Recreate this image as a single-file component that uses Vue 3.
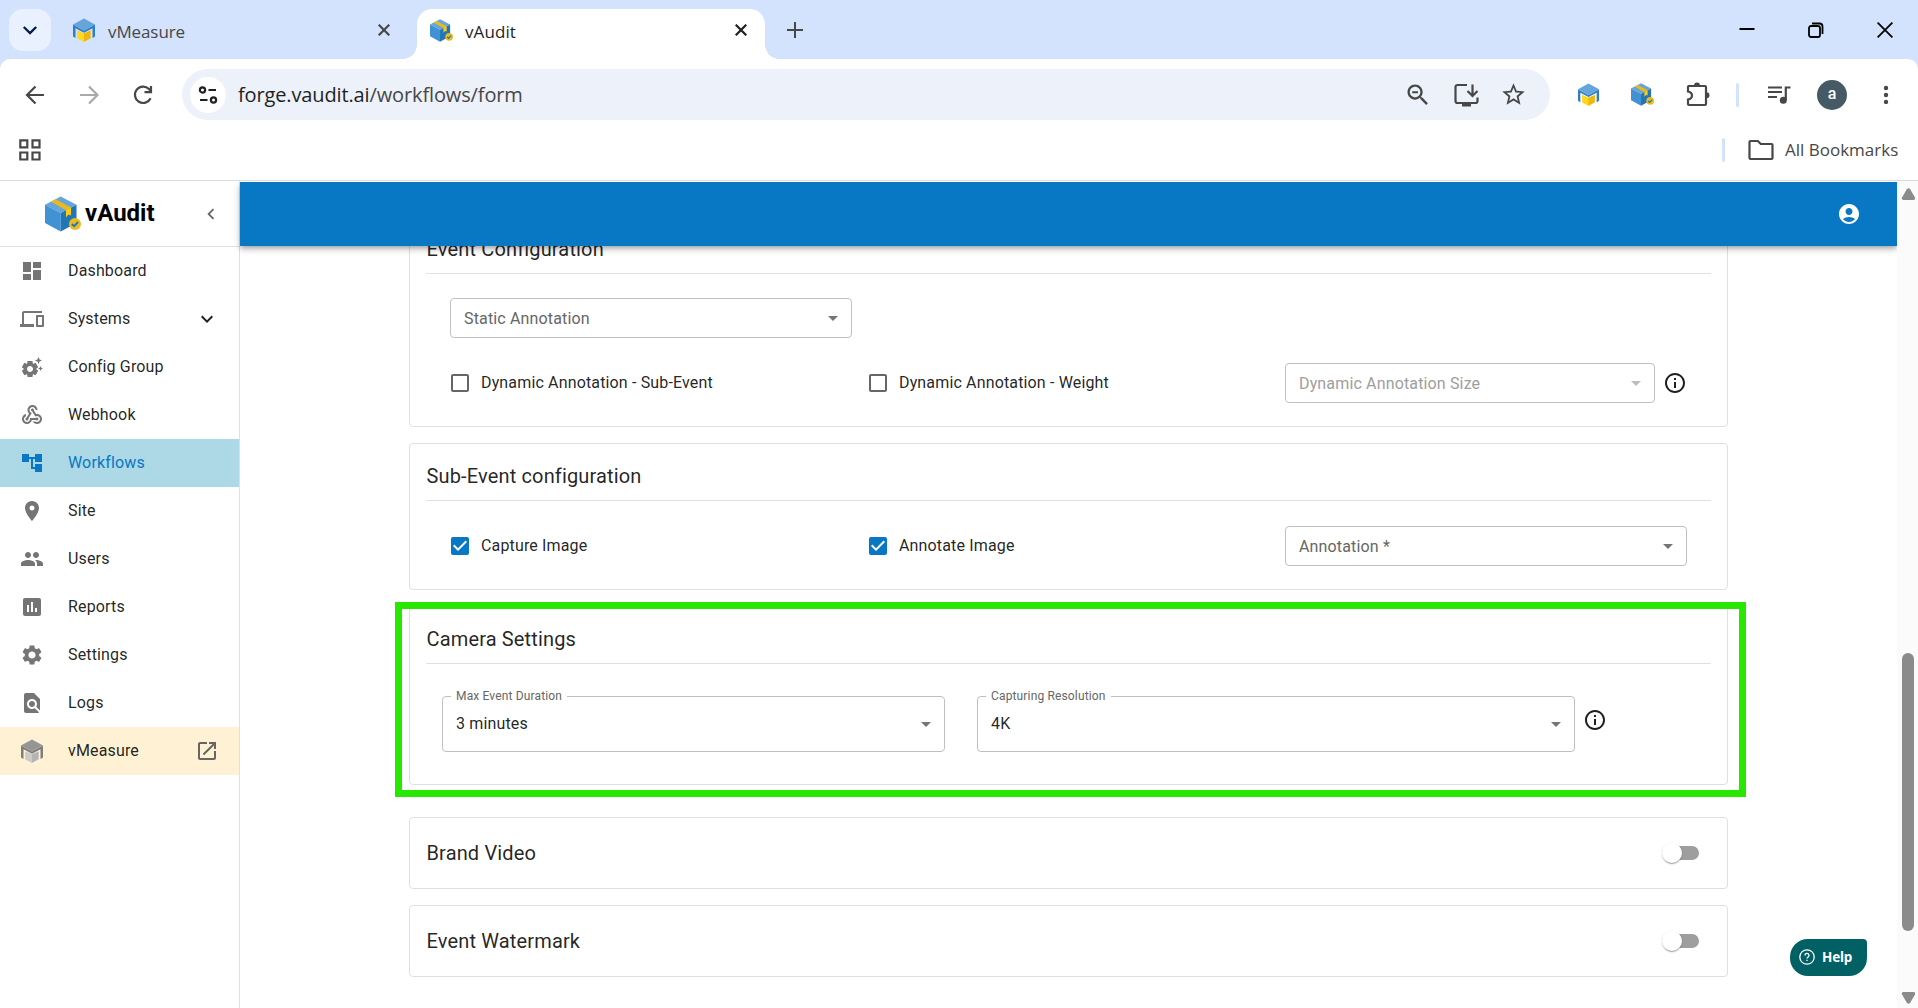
<script setup>
import { ref, h } from 'vue'

const icons = {
  dashboard: 'M3 13h8V3H3v10zm0 8h8v-6H3v6zm10 0h8V11h-8v10zm0-18v6h8V3h-8z',
  devices: 'M4 6h18V4H4c-1.1 0-2 .9-2 2v11H0v3h14v-3H4V6zm19 2h-6c-.55 0-1 .45-1 1v10c0 .55.45 1 1 1h6c.55 0 1-.45 1-1V9c0-.55-.45-1-1-1zm-1 10h-4v-8h4v8z',
  suggest: 'M17.41 6.59L15 5.5l2.41-1.09L18.5 2l1.09 2.41L22 5.5l-2.41 1.09L18.5 9l-1.09-2.41zm3.87 6.13L20.5 11l-.78 1.72-1.72.78 1.72.78.78 1.72.78-1.72L23 13.5l-1.72-.78zm-5.04 1.65l1.94 1.47-2.5 4.33-2.24-.94c-.2.13-.42.26-.64.37l-.3 2.4h-5l-.3-2.41c-.22-.11-.43-.23-.64-.37l-2.24.94-2.5-4.33 1.94-1.47c-.01-.11-.01-.24-.01-.36s0-.25.01-.37l-1.94-1.47 2.5-4.33 2.24.94c.2-.13.42-.26.64-.37L7.5 6h5l.3 2.41c.22.11.43.23.64.37l2.24-.94 2.5 4.33-1.94 1.47c.01.12.01.24.01.37s0 .24-.01.36zM13 14c0-1.66-1.34-3-3-3s-3 1.34-3 3 1.34 3 3 3 3-1.34 3-3z',
  webhook: 'M10 15h5.88c.27-.31.67-.5 1.12-.5.83 0 1.5.67 1.5 1.5s-.67 1.5-1.5 1.5c-.44 0-.84-.19-1.12-.5H11.9c-.46 2.28-2.48 4-4.9 4-2.76 0-5-2.24-5-5 0-2.42 1.72-4.44 4-4.9v2.07C4.84 13.58 4 14.7 4 16c0 1.65 1.35 3 3 3s3-1.35 3-3v-1zm2.5-11c1.65 0 3 1.35 3 3h2c0-2.76-2.24-5-5-5s-5 2.24-5 5c0 1.43.6 2.71 1.55 3.62l-2.35 3.9c-.68.14-1.2.75-1.2 1.48 0 .83.67 1.5 1.5 1.5s1.5-.67 1.5-1.5c0-.16-.02-.31-.07-.45l3.38-5.63C10.49 9.61 9.5 8.42 9.5 7c0-1.65 1.35-3 3-3zm4.5 9c-.64 0-1.23.2-1.72.54l-3.05-5.07C11.53 8.35 11 7.74 11 7c0-.83.67-1.5 1.5-1.5S14 6.17 14 7c0 .15-.02.29-.06.43l2.19 3.65c.28-.05.57-.08.87-.08 2.76 0 5 2.24 5 5s-2.24 5-5 5c-1.85 0-3.47-1.01-4.33-2.5h2.67c.48.32 1.05.5 1.66.5 1.65 0 3-1.35 3-3s-1.35-3-3-3z',
  tree: 'M22 11V3h-7v3H9V3H2v8h7V8h2v10h4v3h7v-8h-7v3h-2V8h2v3h7z',
  place: 'M12 2C8.13 2 5 5.13 5 9c0 5.25 7 13 7 13s7-7.75 7-13c0-3.87-3.13-7-7-7zm0 9.5c-1.38 0-2.5-1.12-2.5-2.5s1.12-2.5 2.5-2.5 2.5 1.12 2.5 2.5-1.12 2.5-2.5 2.5z',
  people: 'M16 11c1.66 0 2.99-1.34 2.99-3S17.66 5 16 5c-1.66 0-3 1.34-3 3s1.34 3 3 3zm-8 0c1.66 0 2.99-1.34 2.99-3S9.66 5 8 5C6.34 5 5 6.34 5 8s1.34 3 3 3zm0 2c-2.33 0-7 1.17-7 3.5V19h14v-2.5c0-2.33-4.67-3.5-7-3.5zm8 0c-.29 0-.62.02-.97.05 1.16.84 1.97 1.97 1.97 3.45V19h6v-2.5c0-2.33-4.67-3.5-7-3.5z',
  reports: 'M19 3H5c-1.1 0-2 .9-2 2v14c0 1.1.9 2 2 2h14c1.1 0 2-.9 2-2V5c0-1.1-.9-2-2-2zM9 17H7v-7h2v7zm4 0h-2V7h2v10zm4 0h-2v-4h2v4z',
  settings: 'M19.14 12.94c.04-.3.06-.61.06-.94 0-.32-.02-.64-.07-.94l2.03-1.58c.18-.14.23-.41.12-.61l-1.92-3.32c-.12-.22-.37-.29-.59-.22l-2.39.96c-.5-.38-1.03-.7-1.62-.94l-.36-2.54c-.04-.24-.24-.41-.48-.41h-3.84c-.24 0-.43.17-.47.41l-.36 2.54c-.59.24-1.13.57-1.62.94l-2.39-.96c-.22-.08-.47 0-.59.22L2.74 8.87c-.12.21-.08.47.12.61l2.03 1.58c-.05.3-.09.63-.09.94s.02.64.07.94l-2.03 1.58c-.18.14-.23.41-.12.61l1.92 3.32c.12.22.37.29.59.22l2.39-.96c.5.38 1.03.7 1.62.94l.36 2.54c.05.24.24.41.48.41h3.84c.24 0 .44-.17.47-.41l.36-2.54c.59-.24 1.13-.56 1.62-.94l2.39.96c.22.08.47 0 .59-.22l1.92-3.32c.12-.22.07-.47-.12-.61l-2.01-1.58zM12 15.6c-1.98 0-3.6-1.62-3.6-3.6s1.62-3.6 3.6-3.6 3.6 1.62 3.6 3.6-1.62 3.6-3.6 3.6z',
  logs: 'M20 19.59V8l-6-6H6c-1.1 0-1.99.9-1.99 2L4 20c0 1.1.89 2 1.99 2H18c.45 0 .85-.15 1.19-.4l-4.43-4.43c-.8.52-1.74.83-2.76.83-2.76 0-5-2.24-5-5s2.24-5 5-5 5 2.24 5 5c0 1.02-.31 1.96-.83 2.75L20 19.59zM9 13c0 1.66 1.34 3 3 3s3-1.34 3-3-1.34-3-3-3-3 1.34-3 3z',
  launch: 'M19 19H5V5h7V3H5c-1.11 0-2 .9-2 2v14c0 1.1.89 2 2 2h14c1.1 0 2-.9 2-2v-7h-2v7zM14 3v2h3.59l-9.83 9.83 1.41 1.41L19 6.41V10h2V3h-7z',
  account: 'M12 2C6.48 2 2 6.48 2 12s4.48 10 10 10 10-4.48 10-10S17.52 2 12 2zm0 4c1.93 0 3.5 1.57 3.5 3.5S13.93 13 12 13s-3.5-1.57-3.5-3.5S10.07 6 12 6zm0 14c-2.03 0-4.43-.82-6.14-2.88C7.55 15.8 9.68 15 12 15s4.45.8 6.14 2.12C16.43 19.18 14.03 20 12 20z',
  info: 'M11 7h2v2h-2zm0 4h2v6h-2zm1-9C6.48 2 2 6.48 2 12s4.48 10 10 10 10-4.48 10-10S17.52 2 12 2zm0 18c-4.41 0-8-3.59-8-8s3.59-8 8-8 8 3.59 8 8-3.59 8-8 8z',
  checked: 'M19 3H5c-1.11 0-2 .9-2 2v14c0 1.1.89 2 2 2h14c1.11 0 2-.9 2-2V5c0-1.1-.89-2-2-2zm-9 14l-5-5 1.41-1.41L10 14.17l7.59-7.59L19 8l-9 9z',
  unchecked: 'M19 5v14H5V5h14m0-2H5c-1.1 0-2 .9-2 2v14c0 1.1.9 2 2 2h14c1.1 0 2-.9 2-2V5c0-1.1-.9-2-2-2z',
  dropdown: 'M7 10l5 5 5-5z',
  expand: 'M16.59 8.59L12 13.17 7.41 8.59 6 10l6 6 6-6z',
  chevron: 'M15.41 7.41L14 6l-6 6 6 6 1.41-1.41L10.83 12z',
  zoomOut: 'M15.5 14h-.79l-.28-.27C15.41 12.59 16 11.11 16 9.5 16 5.91 13.09 3 9.5 3S3 5.91 3 9.5 5.91 16 9.5 16c1.61 0 3.09-.59 4.23-1.57l.27.28v.79l5 4.99L20.49 19l-4.99-5zm-6 0C7.01 14 5 11.99 5 9.5S7.01 5 9.5 5 14 7.01 14 9.5 11.99 14 9.5 14zM7 8.7h5v1.7H7z',
  star: 'M22 9.24l-7.19-.62L12 2 9.19 8.63 2 9.24l5.46 4.73L5.82 21 12 17.27 18.18 21l-1.63-7.03L22 9.24zM12 15.4l-3.76 2.27 1-4.28-3.32-2.88 4.38-.38L12 6.1l1.71 4.04 4.38.38-3.32 2.88 1 4.28L12 15.4z',
}

const Icon = (props) =>
  h('svg', { viewBox: '0 0 24 24', width: props.size || 24, height: props.size || 24, fill: 'currentColor' }, [
    h('path', { d: icons[props.name] }),
  ])
Icon.props = ['name', 'size']

const poly = (fill, points) => h('polygon', { fill, points })

const MeasureLogo = (props) => {
  const c = props.grey
    ? ['#959595', '#7d7d7d', '#bdbdbd', '#cbcbcb', '#b4b4b4']
    : ['#64a5dc', '#2f80c3', '#fdd017', '#ffd91f', '#eeb711']
  return h('svg', { viewBox: '0 0 24 24', width: props.size, height: props.size }, [
    poly(c[1], '1,6.5 12,12.5 23,6.5 23,18.5 20.5,20 20.5,10.2 12,14.7 3.5,10.2 3.5,20 1,18.5'),
    poly(c[0], '12,0.5 23,6.5 12,12.5 1,6.5'),
    poly(c[2], '5.5,12.5 12,15.5 18.5,12.5 18.5,20.2 12,23.8 5.5,20.2'),
    poly(c[3], '5.5,12.5 12,15.5 12,23.8 5.5,20.2'),
    poly(c[4], '18.5,12.5 12,15.5 12,23.8 18.5,20.2'),
  ])
}
MeasureLogo.props = ['size', 'grey']

const AuditLogo = (props) =>
  h('svg', { viewBox: '0 0 36 36', width: props.size, height: props.size }, [
    poly('#64a5dc', '15.7,0.5 31.5,8.7 15.7,17 0,8.7'),
    poly('#4192d3', '0,8.7 15.7,17 15.7,35.5 0,27'),
    poly('#2375b5', '31.5,8.7 15.7,17 15.7,35.5 31.5,27'),
    poly('#e9b91e', '10.8,3.2 26,11.5 21,14.2 6,5.8'),
    poly('#fdcb12', '26,11.5 26,19.6 23.5,18.6 21,21.6 21,14.2'),
    h('circle', { cx: 30, cy: 28, r: 6, fill: '#ebbc20' }),
    h('path', { d: 'M26.8 28l2.3 2.2 4-4.2', fill: 'none', stroke: '#2375b5', 'stroke-width': 1.9 }),
  ])
AuditLogo.props = ['size']

const nav = [
  { label: 'Dashboard', icon: 'dashboard' },
  { label: 'Systems', icon: 'devices', expandable: true },
  { label: 'Config Group', icon: 'suggest' },
  { label: 'Webhook', icon: 'webhook' },
  { label: 'Workflows', icon: 'tree', active: true },
  { label: 'Site', icon: 'place' },
  { label: 'Users', icon: 'people' },
  { label: 'Reports', icon: 'reports' },
  { label: 'Settings', icon: 'settings' },
  { label: 'Logs', icon: 'logs' },
]

const subEvent = ref(false)
const weight = ref(false)
const capture = ref(true)
const annotate = ref(true)
const toggles = ['Brand Video', 'Event Watermark']
</script>

<template>
  <div class="window">
    <div class="tabstrip">
      <button class="tab-search">
        <svg width="16" height="16" viewBox="0 0 16 16" fill="none" stroke="#041e49" stroke-width="2.4"><path d="M1.8 5l6.2 6 6.2-6" /></svg>
      </button>
      <div class="tab">
        <MeasureLogo :size="24" />
        <span class="tab-title">vMeasure</span>
        <svg class="close" width="12" height="12" viewBox="0 0 12 12" stroke="#474747" stroke-width="2.2"><path d="M.7.7l10.6 10.6M11.3.7L.7 11.3" /></svg>
      </div>
      <div class="tab active">
        <AuditLogo :size="23" />
        <span class="tab-title">vAudit</span>
        <svg class="close" width="12" height="12" viewBox="0 0 12 12" stroke="#1f1f1f" stroke-width="2.2"><path d="M.7.7l10.6 10.6M11.3.7L.7 11.3" /></svg>
      </div>
      <svg class="new-tab" width="16" height="16" viewBox="0 0 16 16" stroke="#474747" stroke-width="2"><path d="M8 0v16M0 8h16" /></svg>
      <div class="controls">
        <svg width="16" height="16" viewBox="0 0 16 16" stroke="#000" stroke-width="2"><path d="M.5 7h15" /></svg>
        <svg width="16" height="16" viewBox="0 0 16 16" fill="none" stroke="#000" stroke-width="1.8"><rect x="1" y="4" width="11" height="11" rx="2" /><path d="M4 1.500h7.500a3 3 0 0 1 3 3V12" /></svg>
        <svg width="16" height="16" viewBox="0 0 16 16" stroke="#000" stroke-width="1.8"><path d="M.6.6l14.8 14.8M15.4.6L.6 15.4" /></svg>
      </div>
    </div>

    <div class="chrome">
      <div class="toolbar">
        <svg class="btn" viewBox="0 0 32 32" fill="none" stroke="#474747" stroke-width="2.2"><path d="M25 16H8.500M16.500 7.500L8 16l8.500 8.500" /></svg>
        <svg class="btn" viewBox="0 0 32 32" fill="none" stroke="#a9a9a9" stroke-width="2.2"><path d="M7 16h17M16 7.500l8.500 8.500-8.500 8.500" /></svg>
        <svg class="btn" viewBox="0 0 32 32" fill="none" stroke="#474747" stroke-width="2.2"><path d="M23.600 19.200A8.200 8.200 0 1 1 22 10l2 2.300M24 7v6.200h-6.500" /></svg>
        <div class="omnibox">
          <span class="site-info">
            <svg width="20" height="18" viewBox="0 0 20 18" fill="none" stroke="#202020" stroke-width="2.2"><circle cx="4.500" cy="4" r="2.600" /><path d="M10.500 4H18M2 14h7.500" /><circle cx="15.500" cy="14" r="2.600" /></svg>
          </span>
          <span class="url"><b>forge.vaudit.ai</b>/workflows/form</span>
          <Icon name="zoomOut" :size="28" />
          <svg width="28" height="28" viewBox="0 0 28 28" fill="none" stroke="#474747" stroke-width="2.2"><path d="M15 4H5.500A2 2 0 0 0 3.500 6v14a2 2 0 0 0 2 2h18a2 2 0 0 0 2-2v-3.500M20.500 3.500v11M15.500 10l5 5 5-5" /><path d="M10 24h9" stroke-width="3" /></svg>
          <Icon name="star" :size="27" />
        </div>
        <span class="ext first"><MeasureLogo :size="23" /></span>
        <span class="ext"><AuditLogo :size="23" /></span>
        <svg class="ext puzzle" viewBox="0 0 28 28" fill="none" stroke="#474747" stroke-width="2.2"><path d="M5.500 5h15.500a1 1 0 0 1 1 1v17a1 1 0 0 1-1 1H5a1 1 0 0 1-1-1v-4.500c2.500-.5 4-2 4-4s-1.500-3.500-4-4V6.200A1.200 1.200 0 0 1 5.500 5z" /><path d="M10 4.500a3 3 0 0 1 6 0zM22.500 11.300a3 3 0 0 1 0 6z" fill="#474747" stroke="none" /></svg>
        <i class="divider"></i>
        <svg class="ext plain" viewBox="0 0 28 28" fill="none" stroke="#474747" stroke-width="2.2"><path d="M3 6.500h14M3 11h14M3 16h9M25.500 6.500h-4.700V19" /><circle cx="18.300" cy="19.300" r="3.500" fill="#474747" stroke="none" /></svg>
        <span class="avatar">a</span>
        <svg class="ext dots" viewBox="0 0 28 28" fill="#474747"><circle cx="14" cy="7" r="2.200" /><circle cx="14" cy="14" r="2.200" /><circle cx="14" cy="20.900" r="2.200" /></svg>
      </div>
      <div class="bookmarks">
        <svg width="22" height="22" viewBox="0 0 22 22" fill="none" stroke="#474747" stroke-width="2.2"><path d="M1.300 1.300h7v7h-7zM13.500 1.300h7v7h-7zM1.300 13.500h7v7h-7zM13.500 13.500h7v7h-7z" /></svg>
        <i class="divider"></i>
        <svg class="folder" width="26" height="22" viewBox="0 0 26 22" fill="none" stroke="#474747" stroke-width="2.2"><path d="M2.500 2h7.300l3 3h10.700a1 1 0 0 1 1 1v13a1 1 0 0 1-1 1h-21a1 1 0 0 1-1-1V3a1 1 0 0 1 1-1z" /></svg>
        <span class="all">All Bookmarks</span>
      </div>
    </div>

    <div class="page">
      <aside>
        <div class="brand">
          <AuditLogo :size="36" />
          <strong>vAudit</strong>
          <Icon name="chevron" :size="22" />
        </div>
        <a v-for="item in nav" :key="item.label" :class="['item', { active: item.active }]">
          <Icon :name="item.icon" class="nav-icon" />
          <span>{{ item.label }}</span>
          <Icon v-if="item.expandable" name="expand" class="tail dark" />
        </a>
        <a class="item external">
          <MeasureLogo :size="24" :grey="true" />
          <span>vMeasure</span>
          <Icon name="launch" class="tail" />
        </a>
      </aside>

      <div class="main">
        <header><Icon name="account" /></header>
        <div class="content">
          <section class="card">
            <h2>Event Configuration</h2>
            <div class="body event">
              <div class="select small">Static Annotation<Icon name="dropdown" /></div>
              <div class="row">
                <label class="check" @click="subEvent = !subEvent"><Icon :name="subEvent ? 'checked' : 'unchecked'" :class="{ on: subEvent }" /><span>Dynamic Annotation - Sub-Event</span></label>
                <label class="check" @click="weight = !weight"><Icon :name="weight ? 'checked' : 'unchecked'" :class="{ on: weight }" /><span>Dynamic Annotation - Weight</span></label>
                <div class="select disabled">Dynamic Annotation Size<Icon name="dropdown" /></div>
                <Icon name="info" class="info" />
              </div>
            </div>
          </section>

          <section class="card">
            <h2>Sub-Event configuration</h2>
            <div class="body">
              <div class="row">
                <label class="check" @click="capture = !capture"><Icon :name="capture ? 'checked' : 'unchecked'" :class="{ on: capture }" /><span>Capture Image</span></label>
                <label class="check" @click="annotate = !annotate"><Icon :name="annotate ? 'checked' : 'unchecked'" :class="{ on: annotate }" /><span>Annotate Image</span></label>
                <div class="select small">Annotation *<Icon name="dropdown" /></div>
              </div>
            </div>
          </section>

          <section class="card highlight">
            <h2>Camera Settings</h2>
            <div class="body camera">
              <div class="select tall duration"><small>Max Event Duration</small><span>3 minutes</span><Icon name="dropdown" /></div>
              <div class="select tall resolution"><small>Capturing Resolution</small><span>4K</span><Icon name="dropdown" /></div>
              <Icon name="info" class="info" />
            </div>
          </section>

          <section v-for="title in toggles" :key="title" class="card toggle">
            <h3>{{ title }}</h3>
            <span class="switch"><i></i></span>
          </section>
        </div>
      </div>

      <div class="scrollbar">
        <svg width="15" height="12" viewBox="0 0 15 12" fill="#8b8b8b"><path d="M5.800 1.200Q7.500-.8 9.200 1.200L14 9.500Q14.700 12 12.500 12h-10Q.3 12 1 9.500z" /></svg>
        <i class="thumb"></i>
        <svg width="15" height="12" viewBox="0 0 15 12" fill="#8b8b8b"><path d="M5.800 10.800Q7.500 12.800 9.200 10.800L14 2.500Q14.700 0 12.500 0h-10Q.3 0 1 2.500z" /></svg>
      </div>

      <button class="help">
        <svg width="16" height="16" viewBox="0 0 16 16" fill="none" stroke="#fff" stroke-width="1.3"><circle cx="8" cy="8" r="7.200" /><path d="M6 6.400a2 2 0 1 1 3 1.700c-.7.400-1 .7-1 1.500" /><path d="M8 10.800v1.300" /></svg>
        Help
      </button>
    </div>
  </div>
</template>

<style>
body { margin: 0; overflow: hidden; }
</style>

<style scoped>
* { box-sizing: border-box; }
svg { display: block; flex: none; }
button { border: 0; padding: 0; }
.window { width: 1918px; height: 1008px; display: flex; flex-direction: column; overflow: hidden; background: #d3e2fd; font-family: Roboto, sans-serif; }

.tabstrip { height: 59px; display: flex; align-items: flex-start; padding-left: 9px; font-family: "Open Sans", "Noto Sans", sans-serif; }
.tab-search { width: 42px; height: 42px; margin-top: 9px; border-radius: 14px; background: #eaf1fe; display: flex; align-items: center; justify-content: center; }
.tab { height: 50px; margin-top: 9px; display: flex; align-items: center; width: 344px; padding: 0 8px 8px 0; margin-left: 21px; color: #474747; }
.tab-title { font-size: 17px; letter-spacing: -0.1px; margin: 2px 0 0 12px; }
.close { margin-left: auto; margin-right: 18px; }
.tab.active { position: relative; width: 348px; margin-left: 1px; padding-left: 13px; padding-right: 0; background: #fff; border-radius: 15px 15px 0 0; color: #1f1f1f; }
.tab.active .tab-title { letter-spacing: 0.1px; }
.tab.active::before, .tab.active::after { content: ""; position: absolute; bottom: 0; width: 14px; height: 14px; }
.tab.active::before { left: -14px; background: radial-gradient(circle at 0 0, transparent 13.5px, #fff 14px); }
.tab.active::after { right: -14px; background: radial-gradient(circle at 100% 0, transparent 13.5px, #fff 14px); }
.new-tab { margin: 22px 0 0 22px; }
.controls { margin: 22px 25px 0 auto; display: flex; gap: 53px; }

.chrome { height: 122px; background: #fff; border-radius: 10px 10px 0 0; border-bottom: 1px solid #dcdcdc; font-family: "Open Sans", "Noto Sans", sans-serif; }
.toolbar { display: flex; align-items: center; height: 51px; margin-top: 10px; padding-left: 19px; }
.btn { width: 32px; height: 32px; margin-right: 22px; }
.btn + .btn + .btn { margin-right: 23px; }
.omnibox { width: 1368px; height: 51px; border-radius: 26px; background: #ecf1fa; display: flex; align-items: center; gap: 20px; padding: 0 23px 0 8px; color: #474747; flex: none; }
.site-info { width: 36px; height: 36px; border-radius: 50%; background: #fff; display: flex; align-items: center; justify-content: center; }
.url { font-size: 20px; margin: 0 auto 0 -8px; color: #474747; letter-spacing: -0.13px; }
.url b { font-weight: 400; color: #1f1f1f; }
.ext { width: 28px; height: 28px; margin-left: 26px; display: flex; align-items: center; justify-content: center; flex: none; }
.ext.first { margin-left: 24px; }
.ext.puzzle { margin-left: 28px; }
.divider { width: 3px; height: 24px; border-radius: 2px; background: #d3e2fd; margin-left: 24px; }
.ext.plain { margin-left: 26px; }
.ext.dots { margin-left: 25px; }
.avatar { width: 30px; height: 30px; margin-left: 24px; border-radius: 50%; background: #455a64; color: #fff; font: 500 16px/28px Roboto, sans-serif; text-align: center; }
.bookmarks { height: 60px; display: flex; align-items: center; padding: 0 19px 0 19px; color: #474747; }
.bookmarks .divider { margin-left: auto; }
.folder { margin-left: 23px; }
.all { font-size: 17px; letter-spacing: 0; margin: 0 0 2px 11px; width: 114px; white-space: nowrap; }

.page { position: relative; flex: 1; display: flex; background: #fff; min-height: 0; }
aside { width: 240px; border-right: 1px solid #e0e0e0; flex: none; }
.brand { height: 66px; border-bottom: 1px solid #e0e0e0; display: flex; align-items: center; padding: 0 17px 0 45px; color: #666; }
.brand strong { color: #000; font-size: 24px; margin-left: 4px; font-weight: 700; line-height: 28px; margin-bottom: 1px; }
.brand > svg:last-child { margin-left: auto; }
.item { height: 48px; display: flex; align-items: center; padding: 0 20px; color: rgba(0, 0, 0, .87); font-size: 16px; letter-spacing: .15px; }
.item span { margin-left: 24px; line-height: 24px; }
.nav-icon { color: #757575; }
.item.active { background: #add8e6; color: #0877c4; }
.item.active .nav-icon { color: #0877c4; }
.tail { margin-left: auto; color: #666; }
.tail.dark { color: #212121; }
.external { background: #fff1d3; }

.main { flex: 1; display: flex; flex-direction: column; min-width: 0; padding-top: 1px; }
header { position: relative; z-index: 1; height: 64px; flex: none; background: #0877c4; color: #fff; display: flex; align-items: center; justify-content: flex-end; padding-right: 36px; box-shadow: 0 2px 4px -1px rgba(0, 0, 0, .2), 0 4px 5px rgba(0, 0, 0, .14), 0 1px 10px rgba(0, 0, 0, .12); clip-path: inset(0 0 -20px -10px); }
.content { flex: 1; min-height: 0; overflow: hidden; padding: 0 169px; }
.card { border: 1px solid #e0e0e0; border-radius: 4px; padding: 16px; margin-bottom: 16px; color: rgba(0, 0, 0, .87); }
.card:first-child { margin-top: -30px; }
h2, h3 { margin: 0; font-size: 20px; font-weight: 400; line-height: 32px; letter-spacing: .15px; text-indent: .5px; }
h2 { height: 41px; border-bottom: 1px solid #e0e0e0; }
.body { padding: 25px 24px 7px; display: flex; flex-direction: column; }
.event { padding-top: 24px; gap: 25px; }
.row { display: flex; align-items: center; }
.select { position: relative; height: 40px; border: 1px solid #c0c0c0; border-radius: 4px; display: flex; align-items: center; justify-content: space-between; padding: 0 6px 0 13px; font-size: 16px; letter-spacing: .15px; color: #666; flex: none; }
.select svg { color: #757575; }
.small { width: 402px; }
.disabled { width: 370px; color: #9e9e9e; }
.disabled svg { color: #bdbdbd; }
.check { width: 418px; display: flex; align-items: center; gap: 9px; font-size: 16px; letter-spacing: .15px; margin-left: -2px; color: rgba(0, 0, 0, .87); }
.check span { margin-bottom: 2px; }
.check + .check { margin-left: 0; }
.check + .select { margin-left: 1px; }
.check svg { color: #666; }
.check .on { color: #0877c4; }
.info { margin-left: 8px; color: #1f1f1f; }
.camera { flex-direction: row; padding: 32px 16px 16px; }
.tall { height: 56px; color: rgba(0, 0, 0, .87); }
.tall span { margin-bottom: 2px; }
.tall small { position: absolute; left: 8px; top: -9px; padding: 0 5px; background: #fff; font-size: 12px; line-height: 16px; color: #666; }
.duration { width: 503px; }
.resolution { width: 598px; margin-left: 32px; }
.camera .info { margin-top: 12px; }
.highlight { position: relative; margin-bottom: 32px; }
.highlight::after { content: ""; position: absolute; inset: -5px -19px -13px -15px; border: 7px solid #28e800; }
.toggle { height: 72px; display: flex; align-items: center; justify-content: space-between; }
.switch { width: 34px; height: 14px; border-radius: 7px; background: #9e9e9e; margin-right: 12px; display: flex; align-items: center; }
.switch i { width: 20px; height: 20px; border-radius: 50%; background: #fff; margin-left: -3px; box-shadow: 0 2px 1px -1px rgba(0, 0, 0, .2), 0 1px 1px rgba(0, 0, 0, .14), 0 1px 3px rgba(0, 0, 0, .12); flex: none; }

.scrollbar { width: 21px; background: #fbfbfb; display: flex; flex-direction: column; align-items: center; padding: 7px 0 4px 1px; }
.thumb { width: 12px; height: 278px; border-radius: 6px; background: #8b8b8b; margin: auto 0 61px; }
.help { position: absolute; right: 51px; bottom: 32px; width: 77px; height: 37px; border-radius: 18px 4px 18px 18px; background: #006064; color: #fff; display: flex; align-items: center; gap: 7px; padding: 0 0 1px 9px; font: 700 13.5px/18px "Noto Sans", sans-serif; letter-spacing: -0.2px; }
</style>
